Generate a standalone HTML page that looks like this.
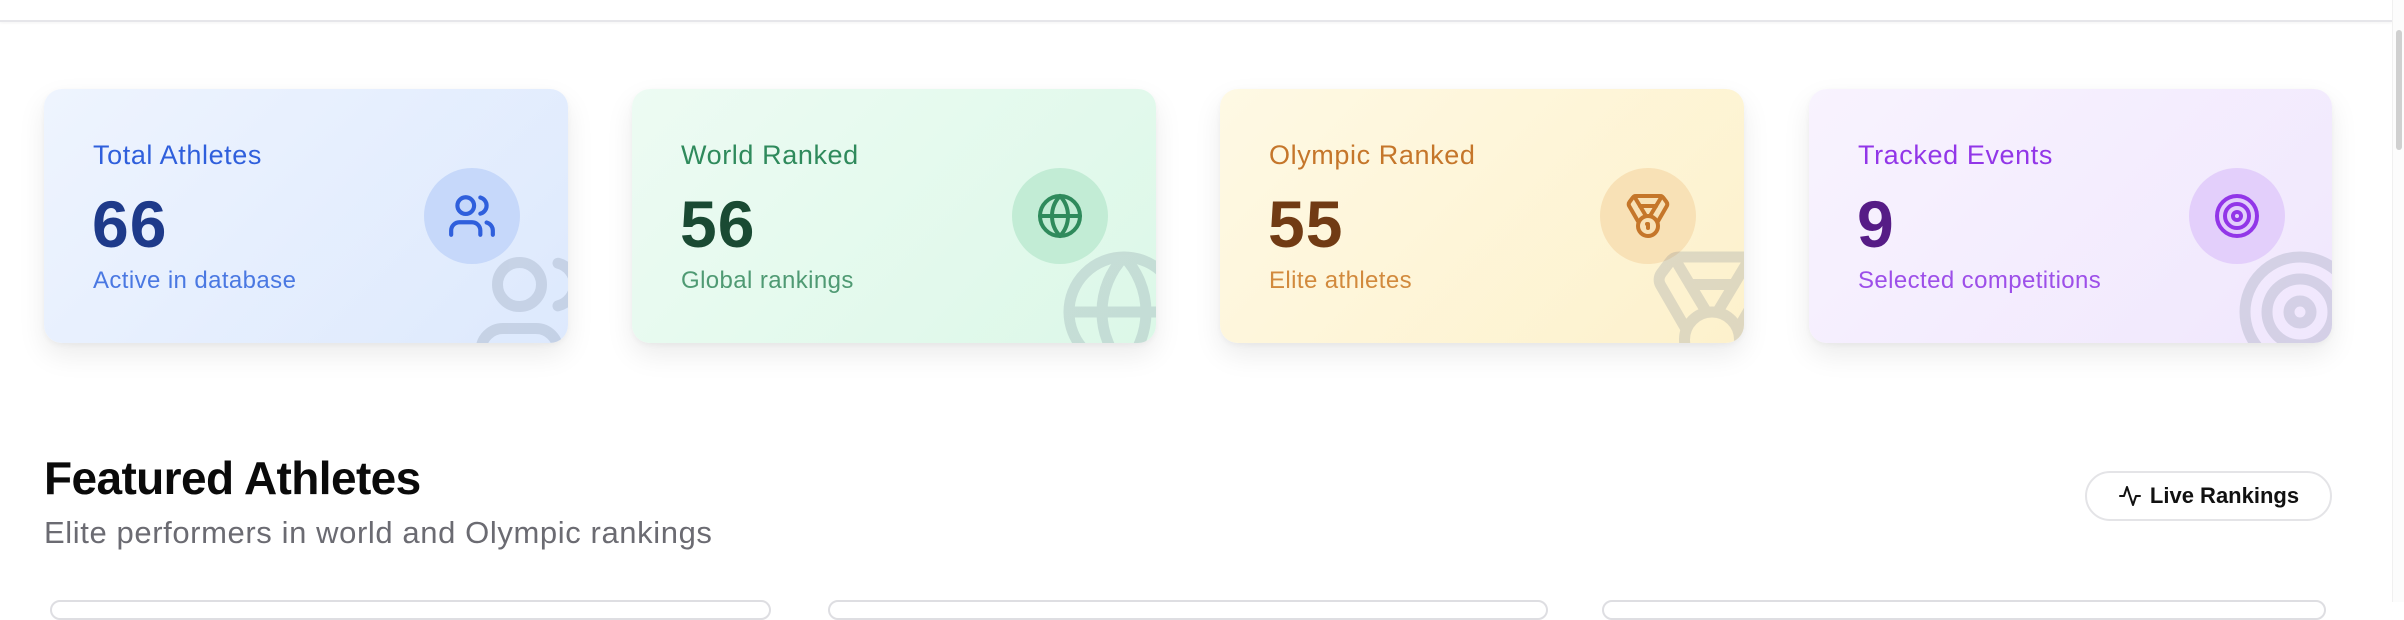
<!DOCTYPE html>
<html><head><meta charset="utf-8"><style>
*{box-sizing:border-box;margin:0;padding:0}
body{width:2404px;height:602px;overflow:hidden;background:#fff;font-family:"Liberation Sans",sans-serif;position:relative}
.hdr{position:absolute;left:0;top:0;width:2392px;height:22px;background:#fff;border-bottom:2px solid #e6e6ea;box-shadow:0 1px 3px rgba(0,0,0,.05)}
.sb{position:absolute;right:0;top:0;width:12px;height:602px;background:#fcfcfc;border-left:1px solid #f0f0f0}
.sb i{position:absolute;left:3px;top:30px;width:6px;height:120px;border-radius:3px;background:#d0d0d0}
.card{position:absolute;top:89px;width:524px;height:254px;border-radius:18px;overflow:hidden;box-shadow:0 12px 28px rgba(0,0,0,.08),0 2px 6px rgba(0,0,0,.04)}
.card .t{position:absolute;left:49px;top:53px;font-size:27px;letter-spacing:.6px;line-height:1}
.n{position:absolute;left:48px;top:102px;font-size:66px;font-weight:bold;line-height:1;letter-spacing:1px}
.s{position:absolute;left:49px;top:180px;font-size:24px;letter-spacing:.4px;line-height:1}
.ic{position:absolute;left:380px;top:79px;width:96px;height:96px;border-radius:50%;display:flex;align-items:center;justify-content:center}
.wm{position:absolute;right:-34px;bottom:-35px;width:132px;height:132px;color:#64748b;opacity:.2}
svg{fill:none;stroke:currentColor;stroke-linecap:round;stroke-linejoin:round}
.h1{position:absolute;left:44px;top:451px;font-size:46px;font-weight:bold;color:#0a0a0a;letter-spacing:-.6px}
.h2{position:absolute;left:44px;top:515px;font-size:31px;letter-spacing:.6px;color:#6b6b72}
.btn{position:absolute;left:2085px;top:471px;width:247px;height:50px;border:2px solid #e4e4e7;border-radius:25px;display:flex;align-items:center;justify-content:center;gap:8px;font-size:22px;font-weight:bold;color:#111}
.bc{position:absolute;top:600px;height:20px;border:2px solid #dedee2;border-radius:14px;background:#fff}
</style></head><body>
<div class="hdr"></div>
<div class="sb"><i></i></div>

<div class="card" style="left:44px;background:linear-gradient(135deg,#eef4fe,#dde9fd)">
<div class="t" style="color:#2f5fdc">Total Athletes</div>
<div class="n" style="color:#1e3a8a">66</div>
<div class="s" style="color:#4a78e2">Active in database</div>
<div class="ic" style="background:#c6d8fa;color:#2f5fdc"><svg width="50" height="50" viewBox="0 0 24 24" stroke-width="2"><path d="M16 21v-2a4 4 0 0 0-4-4H6a4 4 0 0 0-4 4v2"/><circle cx="9" cy="7" r="4"/><path d="M22 21v-2a4 4 0 0 0-3-3.87"/><path d="M16 3.13a4 4 0 0 1 0 7.75"/></svg></div>
<svg class="wm" viewBox="0 0 24 24" stroke-width="2"><path d="M16 21v-2a4 4 0 0 0-4-4H6a4 4 0 0 0-4 4v2"/><circle cx="9" cy="7" r="4"/><path d="M22 21v-2a4 4 0 0 0-3-3.87"/><path d="M16 3.13a4 4 0 0 1 0 7.75"/></svg>
</div>

<div class="card" style="left:632px;background:linear-gradient(135deg,#edfbf3,#dcf8e8)">
<div class="t" style="color:#2f8a5c">World Ranked</div>
<div class="n" style="color:#1a4a33">56</div>
<div class="s" style="color:#4f9a73">Global rankings</div>
<div class="ic" style="background:#c2ecd5;color:#2f8a5c"><svg width="48" height="48" viewBox="0 0 24 24" stroke-width="2"><circle cx="12" cy="12" r="10"/><path d="M12 2a14.5 14.5 0 0 0 0 20 14.5 14.5 0 0 0 0-20"/><path d="M2 12h20"/></svg></div>
<svg class="wm" viewBox="0 0 24 24" stroke-width="2"><circle cx="12" cy="12" r="10"/><path d="M12 2a14.5 14.5 0 0 0 0 20 14.5 14.5 0 0 0 0-20"/><path d="M2 12h20"/></svg>
</div>

<div class="card" style="left:1220px;background:linear-gradient(135deg,#fef9e4,#fdf1cc)">
<div class="t" style="color:#c5762a">Olympic Ranked</div>
<div class="n" style="color:#713b14">55</div>
<div class="s" style="color:#d28a3d">Elite athletes</div>
<div class="ic" style="background:#f8e1b6;color:#c5762a"><svg width="48" height="48" viewBox="0 0 24 24" stroke-width="2"><path d="M7.21 15 2.66 7.14a2 2 0 0 1 .13-2.2L4.4 2.8A2 2 0 0 1 6 2h12a2 2 0 0 1 1.6.8l1.6 2.14a2 2 0 0 1 .14 2.2L16.79 15"/><path d="M11 12 5.12 2.2"/><path d="m13 12 5.88-9.8"/><path d="M8 7h8"/><circle cx="12" cy="17" r="5"/><path d="M12 18v-2h-.5"/></svg></div>
<svg class="wm" viewBox="0 0 24 24" stroke-width="2"><path d="M7.21 15 2.66 7.14a2 2 0 0 1 .13-2.2L4.4 2.8A2 2 0 0 1 6 2h12a2 2 0 0 1 1.6.8l1.6 2.14a2 2 0 0 1 .14 2.2L16.79 15"/><path d="M11 12 5.12 2.2"/><path d="m13 12 5.88-9.8"/><path d="M8 7h8"/><circle cx="12" cy="17" r="5"/></svg>
</div>

<div class="card" style="left:1809px;width:523px;background:linear-gradient(135deg,#f8f3fe,#f0e7fd)">
<div class="t" style="color:#9236e8">Tracked Events</div>
<div class="n" style="color:#561c86">9</div>
<div class="s" style="color:#9d4fe9">Selected competitions</div>
<div class="ic" style="background:#e3cffb;color:#9236e8"><svg width="48" height="48" viewBox="0 0 24 24" stroke-width="2"><circle cx="12" cy="12" r="10"/><circle cx="12" cy="12" r="6"/><circle cx="12" cy="12" r="2"/></svg></div>
<svg class="wm" viewBox="0 0 24 24" stroke-width="2"><circle cx="12" cy="12" r="10"/><circle cx="12" cy="12" r="6"/><circle cx="12" cy="12" r="2"/></svg>
</div>

<div class="h1">Featured Athletes</div>
<div class="h2">Elite performers in world and Olympic rankings</div>
<div class="btn"><svg width="24" height="24" viewBox="0 0 24 24" stroke-width="2"><path d="M22 12h-4l-3 9L9 3l-3 9H2"/></svg>Live Rankings</div>

<div class="bc" style="left:50px;width:721px"></div>
<div class="bc" style="left:828px;width:720px"></div>
<div class="bc" style="left:1602px;width:724px"></div>
</body></html>
